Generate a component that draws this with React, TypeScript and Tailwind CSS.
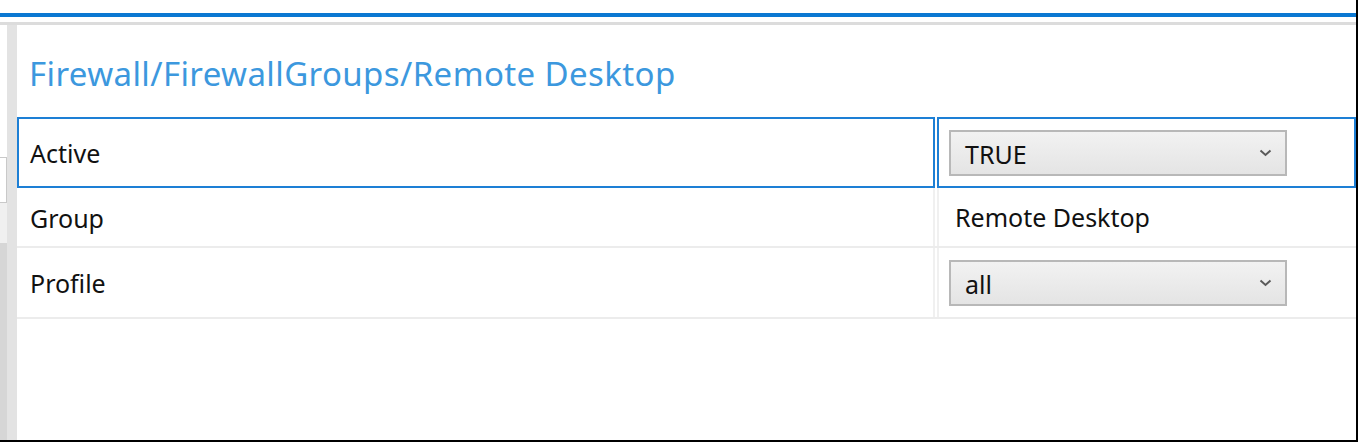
import React from "react";

const font = "font-['Noto_Sans','Open_Sans',sans-serif]";

function Chevron() {
  return (
    <svg width="13" height="8" viewBox="0 0 13 8" className="shrink-0">
      <polyline points="1.5,1.5 6.5,6 11.5,1.5" fill="none" stroke="#5a5a5a" strokeWidth="2" />
    </svg>
  );
}

function Dropdown({ value }: { value: string }) {
  return (
    <div className="ml-[10px] flex h-[46px] w-[338px] items-center justify-between border-2 border-[#b8b8b8] bg-gradient-to-b from-[#f2f2f2] to-[#e4e4e4] pl-[14px] pr-[13px]">
      <span className="pt-[3px] text-[25px] leading-none text-[#111]">{value}</span>
      <Chevron />
    </div>
  );
}

export default function App() {
  return (
    <div className={`${font} flex h-[442px] w-[1358px] flex-col overflow-hidden border-r-2 border-b-2 border-black bg-white`}>
      {/* window top */}
      <div className="h-[13px] shrink-0 bg-white" />
      <div className="h-[4px] shrink-0 bg-[#0b78d2]" />
      <div className="h-[5px] shrink-0 bg-white" />
      <div className="h-[3px] shrink-0 bg-[#dcdcdc]" />

      <div className="flex min-h-0 flex-1">
        {/* left edge of neighbouring pane */}
        <div className="flex w-[7px] shrink-0 flex-col">
          <div className="h-[132px] bg-white" />
          <div className="h-[46px] border-y border-r border-[#c9c9c9] bg-white" />
          <div className="h-[40px] bg-[#f0f0f0]" />
          <div className="flex-1 bg-[#d6d6d6]" />
        </div>
        <div className="w-[10px] shrink-0 bg-[#e3e3e3]" />

        {/* property panel */}
        <div className="flex min-w-0 flex-1 flex-col">
          <div className="flex h-[92px] items-center pl-[12px] pt-[5px]">
            <h1 className="text-[33px] leading-none font-normal tracking-[0.4px] text-[#3c98de]">Firewall/FirewallGroups/Remote Desktop</h1>
          </div>

          {/* Active (selected) */}
          <div className="flex h-[71px] gap-[2px]">
            <div className="flex w-[918px] items-center border-2 border-[#1d7fd5] pl-[11px] pt-[3px]">
              <span className="text-[25px] text-[#111]">Active</span>
            </div>
            <div className="flex flex-1 items-center border-2 border-[#1d7fd5]">
              <Dropdown value="TRUE" />
            </div>
          </div>

          {/* Group */}
          <div className="flex h-[60px] gap-[2px] border-b-2 border-[#ececec]">
            <div className="flex w-[918px] items-center border-r-2 border-[#f0f0f0] pl-[13px] pt-[3px]">
              <span className="text-[25px] text-[#111]">Group</span>
            </div>
            <div className="flex flex-1 items-center border-l-2 border-[#f0f0f0] pl-[16px] pt-[2px]">
              <span className="text-[25px] text-[#111]">Remote Desktop</span>
            </div>
          </div>

          {/* Profile */}
          <div className="flex h-[71px] gap-[2px] border-b-2 border-[#ececec]">
            <div className="flex w-[918px] items-center border-r-2 border-[#f0f0f0] pl-[13px] pt-[3px]">
              <span className="text-[25px] text-[#111]">Profile</span>
            </div>
            <div className="flex flex-1 items-center border-l-2 border-[#f0f0f0]">
              <Dropdown value="all" />
            </div>
          </div>

          <div className="flex-1 bg-white" />
        </div>
      </div>
    </div>
  );
}
